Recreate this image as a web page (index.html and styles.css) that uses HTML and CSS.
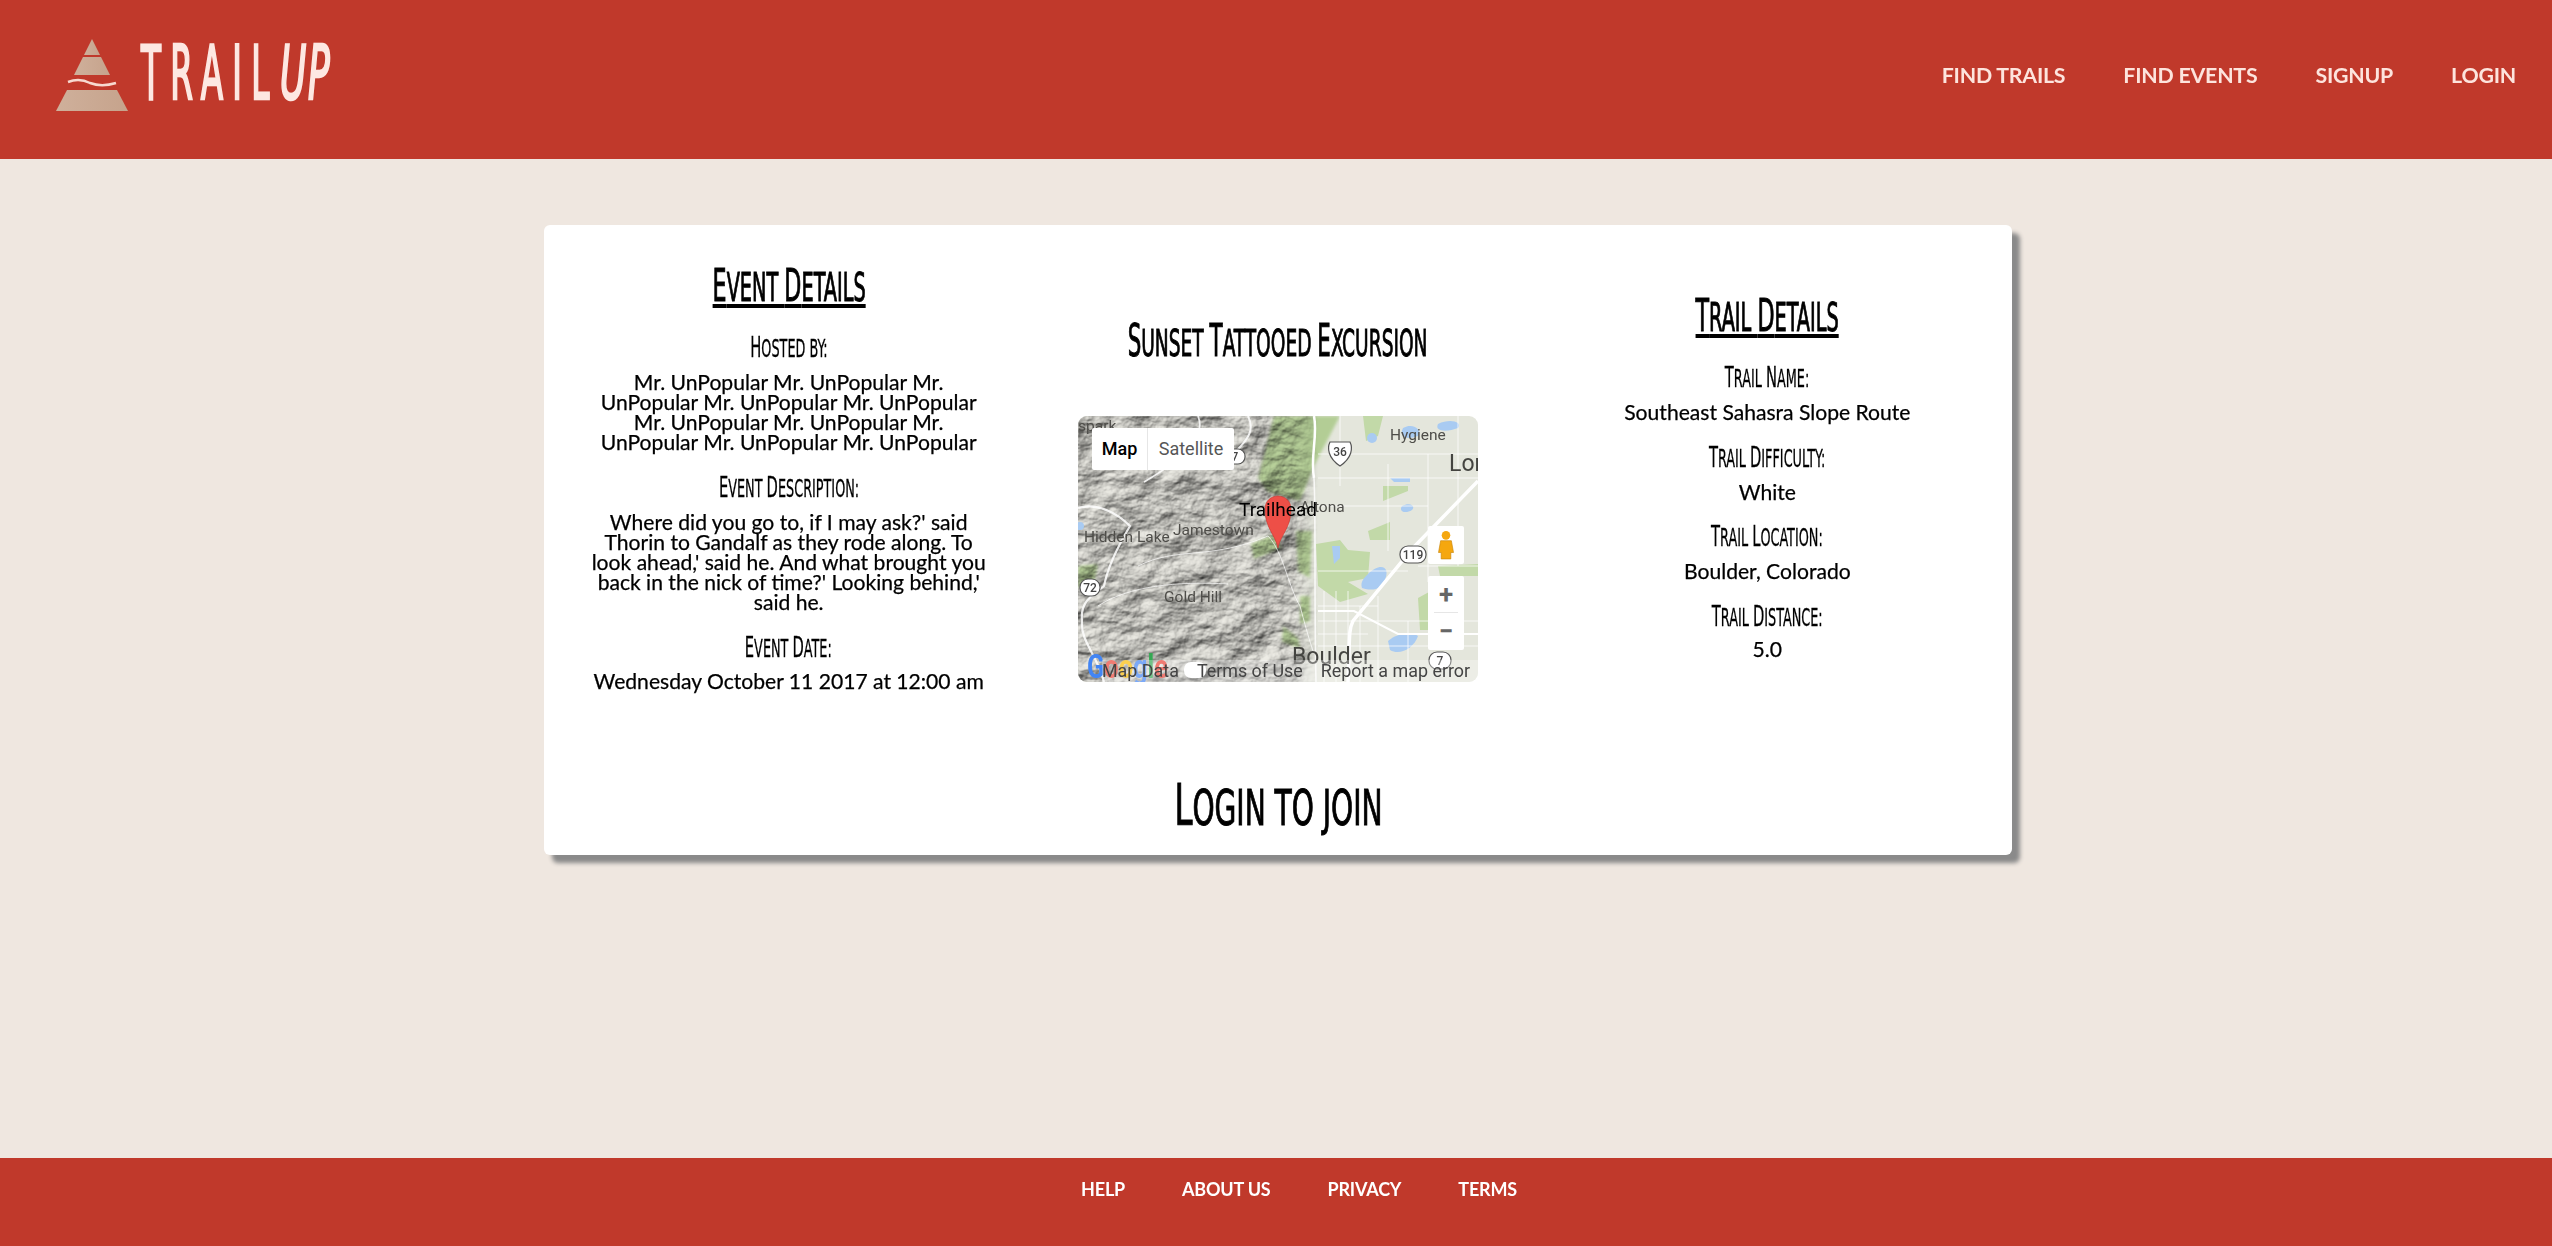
FILE: index.html
```html
<!DOCTYPE html>
<html lang="en">
<head>
<meta charset="utf-8">
<title>TrailUp</title>
<link rel="stylesheet" href="styles.css">
</head>
<body>
<header class="topbar">
  <a class="brand">
    <svg class="brand-mark" viewBox="0 0 72 72" width="72" height="72" aria-hidden="true">
      <defs><linearGradient id="tan" x1="0" x2="1" y1="0" y2="0"><stop offset="0" stop-color="#cfb09b"/><stop offset="1" stop-color="#c6a38c"/></linearGradient></defs>
      <polygon points="36,0 44,16 28,16" fill="url(#tan)"/>
      <polygon points="27,18 45,18 54,36 18,36" fill="url(#tan)"/>
      <polygon points="11,51 61,51 72,72 0,72" fill="url(#tan)"/>
      <path d="M12 43 C20 40 26 40 34 44 C42 47 50 47 60 44" fill="none" stroke="#f7d9d0" stroke-width="2.5"/>
    </svg>
    <span class="brand-name"><span class="brand-trail">TRAIL</span><span class="brand-up">UP</span></span>
  </a>
  <nav class="topnav">
    <a>FIND TRAILS</a><a>FIND EVENTS</a><a>SIGNUP</a><a>LOGIN</a>
  </nav>
</header>

<main class="page">
  <section class="card">
    <div class="columns">
      <div class="col col-event">
        <h2 class="display heading"><span class="squeeze"><span class="cap">E</span>vent <span class="cap">D</span>etails</span></h2>
        <h3 class="display label"><span class="squeeze"><span class="cap">H</span>osted by:</span></h3>
        <p class="value tight">Mr. UnPopular Mr. UnPopular Mr. UnPopular Mr. UnPopular Mr. UnPopular Mr. UnPopular Mr. UnPopular Mr. UnPopular Mr. UnPopular Mr. UnPopular</p>
        <h3 class="display label"><span class="squeeze"><span class="cap">E</span>vent <span class="cap">D</span>escription:</span></h3>
        <p class="value tight">Where did you go to, if I may ask?' said Thorin to Gandalf as they rode along. To look ahead,' said he. And what brought you back in the nick of time?' Looking behind,' said he.</p>
        <h3 class="display label"><span class="squeeze"><span class="cap">E</span>vent <span class="cap">D</span>ate:</span></h3>
        <p class="value">Wednesday October 11 2017 at 12:00 am</p>
      </div>

      <div class="col col-map">
        <h2 class="display title"><span class="squeeze"><span class="cap">S</span>unset <span class="cap">T</span>attooed <span class="cap">E</span>xcursion</span></h2>
        <div class="map">
          <svg class="map-art" viewBox="0 0 400 266" width="400" height="266" aria-hidden="true">
            <defs>
              <filter id="terrain" x="0" y="0" width="100%" height="100%" color-interpolation-filters="sRGB">
                <feTurbulence type="fractalNoise" baseFrequency="0.028 0.04" numOctaves="6" seed="11" result="n"/>
                <feDiffuseLighting in="n" surfaceScale="5.5" diffuseConstant="0.98" lighting-color="#f2f1ea"><feDistantLight azimuth="235" elevation="52"/></feDiffuseLighting>
                <feGaussianBlur stdDeviation="0.55"/>
              </filter>
              <filter id="soft" x="0" y="0" width="100%" height="100%"><feGaussianBlur stdDeviation="1.6"/></filter>
              <linearGradient id="fade" x1="0" x2="1" y1="0" y2="0"><stop offset="0.9" stop-color="#fff"/><stop offset="1" stop-color="#000"/></linearGradient>
              <mask id="fadeMask"><rect width="240" height="266" fill="url(#fade)"/></mask>
            </defs>
            <rect width="400" height="266" fill="#e4e6dc"/>
            <rect width="240" height="266" filter="url(#terrain)" mask="url(#fadeMask)"/>
            <g fill="#bfe09f" opacity=".85" style="mix-blend-mode:multiply" filter="url(#soft)">
              <path d="M196 0H262L236 50L222 85L190 76L180 62Z"/>
              <path d="M218 115H234L232 162L220 155Z"/>
              <path d="M173 128L196 118L204 132L176 143Z"/>
              <path d="M222 180H232V205L222 208Z"/>
              <path d="M0 150L20 148L16 168L0 172Z"/>
              <path d="M205 210L220 222L222 232L204 226Z"/>
            </g>
            <g fill="#c2d9a8">
              <path d="M238 128L262 124L270 134L292 136L290 162L270 166L290 178L262 186L240 170Z"/>
              <path d="M290 115L312 106L312 124L292 124Z"/>
              <path d="M285 0H305L300 20L288 25Z"/>
              <path d="M340 182L362 170L362 214L342 214Z"/>
              <path d="M360 150L400 148V160L362 160Z"/>
              <path d="M305 70H330V75L305 85Z"/>
            </g>
            <g fill="#a9cbf2">
              <path d="M290 158C302 146 314 150 306 166C304 172 296 176 284 172C282 166 286 162 290 158Z"/>
              <path d="M310 225C320 216 336 216 340 220C336 232 322 240 312 234Z"/>
              <path d="M325 12C335 6 345 14 340 20C330 24 320 22 325 12Z"/>
              <path d="M360 8C372 2 385 6 380 12C370 16 356 16 360 8Z"/>
              <path d="M254 130H262V142L256 148Z"/>
              <circle cx="2" cy="110" r="4"/>
              <circle cx="294" cy="22" r="5"/>
              <path d="M312 62H332V66H316Z"/>
              <path d="M324 90C332 86 338 90 334 94C328 98 320 96 324 90Z"/>
            </g>
            <g fill="none" stroke="#fff" stroke-width="1" opacity=".75">
              <path d="M262 0V70M240 38H400M240 62H400M310 48V135M350 38V166M380 0V150M240 90H350M240 155H330M240 205H400M240 230H400M246 175V266M258 175V266M270 175V266M282 190V266M300 180V266M330 205V266M240 190H300M240 218H290M340 150H400"/>
            </g>
            <g fill="none" stroke="#fff">
              <path d="M400 65L335 132L275 205C270 215 272 225 270 266" stroke-width="3.5"/>
              <path d="M236 0C240 20 232 40 236 62" stroke-width="2.5"/>
              <path d="M236 62C238 100 236 170 238 266" stroke-width="1.6" opacity=".8"/>
              <path d="M240 195H276L320 218H400" stroke-width="2"/>
              <path d="M0 92C20 86 40 98 52 110C40 130 30 150 26 170C14 180 2 185 4 205C2 225 20 240 26 266" stroke-width="2.2" opacity=".85"/>
              <path d="M120 0C128 20 110 40 66 66" stroke-width="1.8" opacity=".85"/>
              <path d="M170 0C180 20 160 30 155 40" stroke-width="2" opacity=".85"/>
              <path d="M60 150C100 130 130 145 190 120C205 135 210 170 222 190C226 205 230 220 235 235M20 190C50 170 100 165 150 168" stroke-width="1" opacity=".7"/>
            </g>
            <g class="shield" fill="#fff" stroke="#555" stroke-width="1.2">
              <path d="M252 26H272C275 32 274 42 262 50C250 42 249 32 252 26Z"/>
              <rect x="322" y="130" width="26" height="17" rx="8"/>
              <rect x="2" y="163" width="20" height="17" rx="8"/>
              <rect x="351" y="236" width="22" height="17" rx="8"/>
              <rect x="147" y="33" width="20" height="15" rx="7"/>
              <rect x="106" y="246" width="22" height="16" rx="7" stroke="none"/>
            </g>
            <g class="shield-text" text-anchor="middle">
              <text x="262" y="40">36</text><text x="335" y="143">119</text><text x="12" y="176">72</text><text x="362" y="249">7</text><text x="157" y="45">7</text>
            </g>
            <g class="place">
              <text x="312" y="24">Hygiene</text>
              <text x="371" y="55" class="place-big">Lon</text>
              <text x="222" y="96">Altona</text>
              <text x="6" y="126">Hidden Lake</text>
              <text x="95" y="119">Jamestown</text>
              <text x="86" y="186">Gold Hill</text>
              <text x="214" y="248" class="place-big">Boulder</text>
              <text x="0" y="15">spark</text>
            </g>
            <path class="pin" d="M200 132C197 118 187 112 187 93C187 85 193 80 200 80C207 80 213 85 213 93C213 112 203 118 200 132Z"/>
            <text class="pin-label" x="200" y="100" text-anchor="middle">Trailhead</text>
            <text class="glogo" x="9" y="262" textLength="81" lengthAdjust="spacingAndGlyphs"><tspan fill="#4285f4">G</tspan><tspan fill="#ea4335">o</tspan><tspan fill="#fbbc05">o</tspan><tspan fill="#4285f4">g</tspan><tspan fill="#34a853">l</tspan><tspan fill="#ea4335">e</tspan></text>
          </svg>
          <div class="map-type"><span class="type-active">Map</span><span class="type-other">Satellite</span></div>
          <div class="map-btn pegman">
            <svg viewBox="0 0 16 28" width="18" height="30" aria-hidden="true"><circle cx="8" cy="5" r="4" fill="#f5a70f"/><path d="M3 10h10l2 11h-2.5v6h-9v-6H1Z" fill="#f5a70f" stroke="#c98508" stroke-width=".6"/></svg>
          </div>
          <div class="map-btn zoom">
            <span class="zoom-sign">+</span><span class="zoom-rule"></span><span class="zoom-sign">−</span>
          </div>
          <div class="map-attr"><span>Map Data</span><span>Terms of Use</span><span>Report a map error</span></div>
        </div>
      </div>

      <div class="col col-trail">
        <h2 class="display heading"><span class="squeeze"><span class="cap">T</span>rail <span class="cap">D</span>etails</span></h2>
        <h3 class="display label"><span class="squeeze"><span class="cap">T</span>rail <span class="cap">N</span>ame:</span></h3>
        <p class="value">Southeast Sahasra Slope Route</p>
        <h3 class="display label"><span class="squeeze"><span class="cap">T</span>rail <span class="cap">D</span>ifficulty:</span></h3>
        <p class="value">White</p>
        <h3 class="display label"><span class="squeeze"><span class="cap">T</span>rail <span class="cap">L</span>ocation:</span></h3>
        <p class="value">Boulder, Colorado</p>
        <h3 class="display label"><span class="squeeze"><span class="cap">T</span>rail <span class="cap">D</span>istance:</span></h3>
        <p class="value">5.0</p>
      </div>
    </div>
    <h2 class="display join"><span class="squeeze"><span class="cap">L</span>ogin to join</span></h2>
  </section>
</main>

<footer class="bottombar">
  <a>HELP</a><a>ABOUT US</a><a>PRIVACY</a><a>TERMS</a>
</footer>
</body>
</html>
```
FILE: styles.css
```css
* { box-sizing: border-box; }
html, body { margin: 0; height: 100%; }
body {
  display: flex;
  flex-direction: column;
  background: #efe7e0;
  color: #000;
  font-family: "Lato", "Liberation Sans", sans-serif;
}
h2, h3, p { margin: 0; font-weight: 400; }

.topbar {
  flex: none;
  height: 159px;
  background: #c0392b;
  display: flex;
  justify-content: space-between;
  align-items: flex-start;
  padding: 0 36px 0 56px;
}
.brand { display: flex; align-items: flex-start; padding-top: 39px; }
.brand-mark { display: block; }
.brand-name {
  display: flex;
  margin: -3px 0 0 13px;
  color: #fde8e2;
  font-family: "Liberation Sans Narrow", "DejaVu Sans Condensed", sans-serif;
  font-size: 74px;
  line-height: 74px;
  -webkit-text-stroke: 2.5px #fde8e2;
}
.brand-trail { display: inline-block; width: 132px; transform: scaleX(.49); transform-origin: left; letter-spacing: 19px; white-space: nowrap; }
.brand-up { display: inline-block; margin-left: 7px; width: 52px; font-style: italic; transform: scaleX(.54); transform-origin: left; letter-spacing: 3px; }

.topnav { display: flex; gap: 58px; padding-top: 61px; }
.topnav a { color: #fde4dd; font-size: 21.33px; line-height: 28px; font-weight: 700; letter-spacing: -.22px; white-space: nowrap; }

.page { flex: 1; padding: 66px 0 0 4px; }
.card {
  width: 1468px;
  height: 630px;
  margin: 0 auto;
  background: #fff;
  border-radius: 6px;
  box-shadow: 8px 8px 4px #8a8a8a;
}
.columns { display: grid; grid-template-columns: repeat(3, minmax(0, 1fr)); }
.col { padding: 0 44px; text-align: center; min-width: 0; }

.display { font-family: "Liberation Sans Narrow", "DejaVu Sans Condensed", sans-serif; text-transform: uppercase; display: flex; justify-content: center; white-space: nowrap; }
.squeeze { display: inline-block; flex: none; transform: scaleX(.57); }
.cap { font-size: 1.15em; }

.heading { font-size: 39px; line-height: 46px; -webkit-text-stroke: 1px #000; }
.heading .squeeze { transform: scaleX(.55); text-decoration: underline; text-decoration-thickness: 4px; text-underline-offset: 3px; text-decoration-skip-ink: none; }
.label { font-size: 25px; line-height: 30px; -webkit-text-stroke: .3px #000; }
.value { font-size: 21.1px; line-height: 28px; -webkit-text-stroke: .25px #000; }
.value.tight { line-height: 20px; }

.col-event { padding-top: 38px; }
.col-event .label { margin-top: 20px; }
.col-event .heading + .label { margin-top: 21px; }
.col-event .value { margin-top: 3px; }
.col-event .value.tight { margin-top: 8px; }
.col-trail { padding-top: 68px; }
.col-trail .label { margin-top: 15.6px; }
.col-trail .heading + .label { margin-top: 21px; }
.col-trail .value { margin-top: 4px; }
.col-trail .value:last-child { margin-top: 2.5px; }

.col-map { padding-top: 93px; }
.title { font-size: 38px; line-height: 46px; -webkit-text-stroke: 1px #000; }
.title .squeeze { transform: scaleX(.544); }
.map { position: relative; width: 400px; height: 266px; margin: 50px auto 0; border-radius: 9px; overflow: hidden; }
.map-art { display: block; }
.shield-text { font: 500 12px "Roboto", sans-serif; fill: #444; }
.place { font: 400 15.5px "Roboto", sans-serif; fill: #4e4d49; }
.place-big { font-size: 23px; fill: #444440; }
.pin { fill: #ee4f47; stroke: #c8372f; stroke-width: .6; }
.pin-label { font: 400 19px "Roboto", sans-serif; fill: #000; }
.glogo { font: 700 34px "Roboto", sans-serif; }

.map-type { position: absolute; left: 14px; top: 12px; height: 42px; display: flex; background: #fff; border-radius: 2px; font: 400 18px/42px "Roboto", sans-serif; }
.type-active { width: 56px; text-align: center; font-weight: 500; color: #000; border-right: 1px solid #e6e6e6; }
.type-other { width: 86px; text-align: center; color: #565656; }

.map-btn { position: absolute; left: 350px; width: 36px; background: #fff; border-radius: 2px; display: flex; flex-direction: column; align-items: center; }
.pegman { top: 110px; height: 38px; justify-content: center; }
.zoom { top: 160px; height: 74px; }
.zoom-sign { height: 36px; font: 700 26px/36px "Roboto", sans-serif; color: #666; }
.zoom-rule { width: 24px; height: 1px; background: #e6e6e6; }

.map-attr { position: absolute; left: 24px; right: 0; bottom: 0; height: 22px; display: flex; gap: 18px; font: 400 17.9px/22px "Roboto", sans-serif; color: #444; background: rgba(255,255,255,.3); }

.join { margin-top: 81px; font-size: 50px; line-height: 60px; -webkit-text-stroke: 1px #000; }
.join .squeeze { transform: scaleX(.625); }

.bottombar {
  flex: none;
  height: 88px;
  background: #c0392b;
  display: flex;
  justify-content: center;
  gap: 57px;
  padding: 17px 0 0 46px;
}
.bottombar a { color: #fff; font-size: 18px; line-height: 28px; font-weight: 700; letter-spacing: -.2px; white-space: nowrap; }
```
